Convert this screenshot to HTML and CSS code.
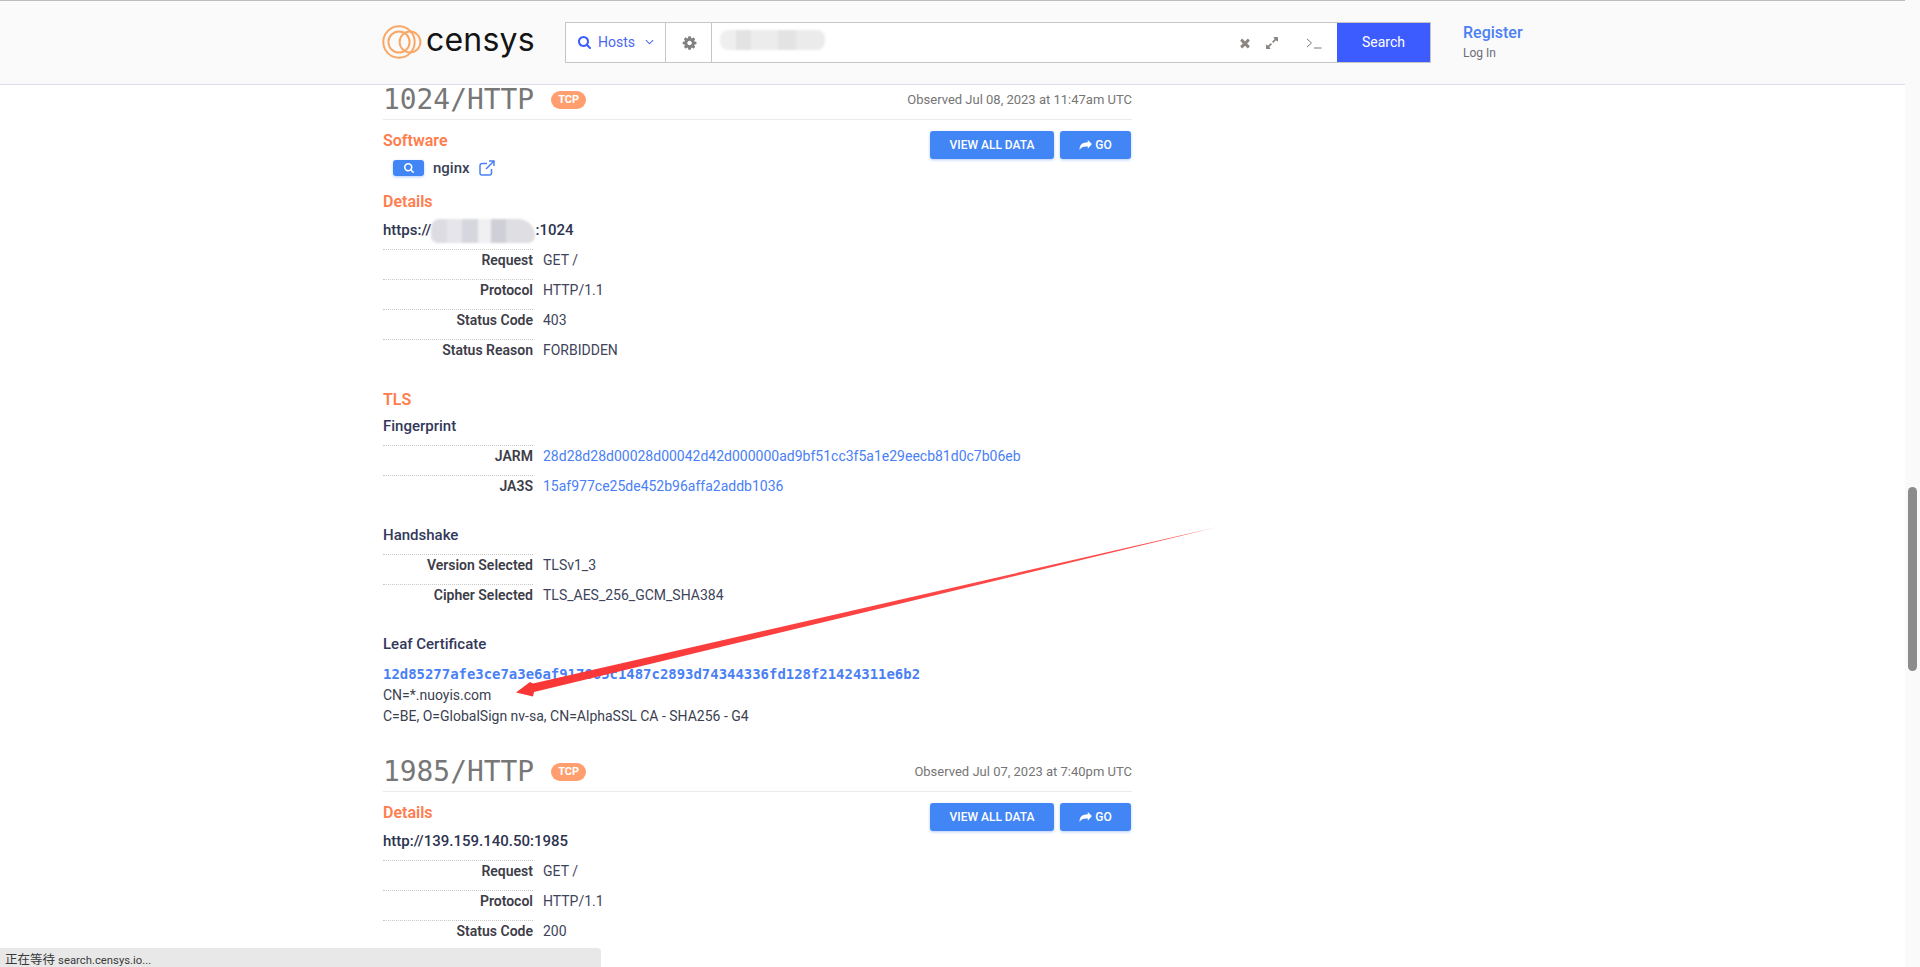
FILE: index.html
```html
<!DOCTYPE html>
<html lang="en">
<head>
<meta charset="utf-8">
<title>Censys</title>
<link rel="stylesheet" href="styles.css">
</head>
<body>
<header class="topbar">
  <div class="logo">
    <svg class="logo-rings" viewBox="0 0 40 36" aria-hidden="true">
      <circle cx="17" cy="18" r="15.7"/><circle cx="17" cy="18" r="10.6"/><circle cx="28" cy="18" r="10.4"/>
    </svg>
    <span class="logo-text">censys</span>
  </div>
  <div class="searchbox">
    <div class="seg seg-hosts">
      <svg class="ic ic-hosts" viewBox="0 0 1664 1664"><path d="M1152 704q0-185-131.500-316.500t-316.500-131.500-316.500 131.500-131.500 316.500 131.500 316.500 316.500 131.500 316.500-131.500 131.500-316.500zm512 832q0 52-38 90t-90 38q-54 0-90-38l-343-342q-179 124-399 124-143 0-273.500-55.500t-225-150-150-225-55.500-273.500 55.500-273.500 150-225 225-150 273.500-55.500 273.500 55.500 225 150 150 225 55.500 273.500q0 220-124 399l343 343q37 37 37 90z"/></svg>
      <span>Hosts</span>
      <svg class="chev" viewBox="0 0 10 6"><path d="M1 1l4 4 4-4"/></svg>
    </div>
    <div class="seg seg-gear">
      <svg class="ic ic-gear" viewBox="0 0 1792 1792"><path transform="translate(64 0)" d="M1152 896q0-106-75-181t-181-75-181 75-75 181 75 181 181 75 181-75 75-181zm512-109v222q0 12-8 23t-20 13l-185 28q-19 54-39 91 35 50 107 138 10 12 10 25t-9 23q-27 37-99 108t-94 71q-12 0-26-9l-138-108q-44 23-91 38-16 136-29 186-7 28-36 28h-222q-14 0-24.500-8.500t-11.500-21.500l-28-184q-49-16-90-37l-141 107q-10 9-25 9-14 0-25-11-126-114-165-168-7-10-7-23 0-12 8-23 15-21 51-66.500t54-70.500q-27-50-41-99l-183-27q-13-2-21-12.500t-8-23.500v-222q0-12 8-23t19-13l186-28q14-46 39-92-40-57-107-138-10-12-10-24 0-10 9-23 26-36 98.500-107.500t94.500-71.500q13 0 26 10l138 107q44-23 91-38 16-136 29-186 7-28 36-28h222q14 0 24.500 8.500t11.500 21.500l28 184q49 16 90 37l142-107q9-9 24-9 13 0 25 10 129 119 165 170 7 8 7 22 0 12-8 23-15 21-51 66.500t-54 70.500q26 50 41 98l183 28q13 2 21 12.500t8 23.500z"/></svg>
    </div>
    <div class="seg-input">
      <div class="redact-query"></div>
      <div class="input-icons">
        <svg class="ic ic-x" viewBox="0 0 1792 1792"><path d="M1490 1322q0 40-28 68l-136 136q-28 28-68 28t-68-28l-294-294-294 294q-28 28-68 28t-68-28l-136-136q-28-28-28-68t28-68l294-294-294-294q-28-28-28-68t28-68l136-136q28-28 68-28t68 28l294 294 294-294q28-28 68-28t68 28l136 136q28 28 28 68t-28 68l-294 294 294 294q28 28 28 68z"/></svg>
        <svg class="ic ic-expand" viewBox="0 0 1792 1792"><path d="M883 1056q0 13-10 23l-332 332 144 144q19 19 19 45t-19 45-45 19h-448q-26 0-45-19t-19-45v-448q0-26 19-45t45-19 45 19l144 144 332-332q10-10 23-10t23 10l114 114q10 10 10 23zm781-864v448q0 26-19 45t-45 19-45-19l-144-144-332 332q-10 10-23 10t-23-10l-114-114q-10-10-10-23t10-23l332-332-144-144q-19-19-19-45t19-45 45-19h448q26 0 45 19t19 45z"/></svg>
        <svg class="ic-term" viewBox="0 0 16 12"><path d="M1 2l4.500 4L1 10M8 11h7.500"/></svg>
      </div>
    </div>
    <button class="search-btn">Search</button>
  </div>
  <div class="account">
    <a class="register">Register</a>
    <a class="login">Log In</a>
  </div>
</header>

<main class="content">
  <section class="service">
    <div class="svc-head">
      <h2 class="svc-title">1024/HTTP</h2>
      <span class="tcp">TCP</span>
      <span class="observed">Observed Jul 08, 2023 at 11:47am UTC</span>
    </div>
    <div class="svc-body">
      <div class="svc-main">
        <h3 class="orange">Software</h3>
        <div class="sw-row">
          <span class="sw-btn"><svg viewBox="0 0 1664 1664"><path d="M1152 704q0-185-131.500-316.500t-316.500-131.500-316.500 131.500-131.500 316.500 131.500 316.500 316.500 131.500 316.500-131.500 131.500-316.500zm512 832q0 52-38 90t-90 38q-54 0-90-38l-343-342q-179 124-399 124-143 0-273.500-55.500t-225-150-150-225-55.500-273.500 55.500-273.500 150-225 225-150 273.500-55.500 273.500 55.500 225 150 150 225 55.500 273.500q0 220-124 399l343 343q37 37 37 90z"/></svg></span>
          <span class="sw-name">nginx</span>
          <svg class="ext" viewBox="0 0 16 16"><path d="M12.500 9v4a2 2 0 0 1-2 2H3a2 2 0 0 1-2-2V5.500a2 2 0 0 1 2-2h5M10 1h5v5M15 1L7 9"/></svg>
        </div>
        <h3 class="orange gap-sec">Details</h3>
        <div class="url">https://<span class="redact-url"></span>:1024</div>
        <div class="kv">
          <div class="kv-row"><span class="k">Request</span><span class="v">GET /</span></div>
          <div class="kv-row"><span class="k">Protocol</span><span class="v">HTTP/1.1</span></div>
          <div class="kv-row"><span class="k">Status Code</span><span class="v">403</span></div>
          <div class="kv-row"><span class="k">Status Reason</span><span class="v">FORBIDDEN</span></div>
        </div>
        <h3 class="orange gap-tls">TLS</h3>
        <div class="sub">Fingerprint</div>
        <div class="kv">
          <div class="kv-row"><span class="k">JARM</span><a class="v link">28d28d28d00028d00042d42d000000ad9bf51cc3f5a1e29eecb81d0c7b06eb</a></div>
          <div class="kv-row"><span class="k">JA3S</span><a class="v link">15af977ce25de452b96affa2addb1036</a></div>
        </div>
        <div class="sub sub-hand">Handshake</div>
        <div class="kv">
          <div class="kv-row"><span class="k">Version Selected</span><span class="v">TLSv1_3</span></div>
          <div class="kv-row"><span class="k">Cipher Selected</span><span class="v">TLS_AES_256_GCM_SHA384</span></div>
        </div>
        <div class="sub sub-leaf">Leaf Certificate</div>
        <a class="hash">12d85277afe3ce7a3e6af917865c1487c2893d74344336fd128f21424311e6b2</a>
        <div class="cert">CN=*.nuoyis.com</div>
        <div class="cert">C=BE, O=GlobalSign nv-sa, CN=AlphaSSL CA - SHA256 - G4</div>
      </div>
      <div class="svc-actions">
        <a class="btn btn-all">VIEW ALL DATA</a>
        <a class="btn btn-go"><svg viewBox="0 0 1792 1400"><path d="M1792 560 1216 0v320C500 340 60 620 60 1400c200-400 600-540 1156-500v320z"/></svg>GO</a>
      </div>
    </div>
  </section>

  <section class="service next">
    <div class="svc-head">
      <h2 class="svc-title">1985/HTTP</h2>
      <span class="tcp">TCP</span>
      <span class="observed">Observed Jul 07, 2023 at 7:40pm UTC</span>
    </div>
    <div class="svc-body">
      <div class="svc-main">
        <h3 class="orange">Details</h3>
        <div class="url">http://139.159.140.50:1985</div>
        <div class="kv">
          <div class="kv-row"><span class="k">Request</span><span class="v">GET /</span></div>
          <div class="kv-row"><span class="k">Protocol</span><span class="v">HTTP/1.1</span></div>
          <div class="kv-row"><span class="k">Status Code</span><span class="v">200</span></div>
        </div>
      </div>
      <div class="svc-actions">
        <a class="btn btn-all">VIEW ALL DATA</a>
        <a class="btn btn-go"><svg viewBox="0 0 1792 1400"><path d="M1792 560 1216 0v320C500 340 60 620 60 1400c200-400 600-540 1156-500v320z"/></svg>GO</a>
      </div>
    </div>
  </section>
</main>

<svg class="arrow" viewBox="0 0 1920 967" aria-hidden="true">
  <defs>
    <linearGradient id="fade" gradientUnits="userSpaceOnUse" x1="1222" y1="526" x2="516" y2="692">
      <stop offset="0" stop-color="#ff3b3b" stop-opacity=".3"/>
      <stop offset=".05" stop-color="#ff3b3b" stop-opacity=".9"/>
      <stop offset="1" stop-color="#f93636"/>
    </linearGradient>
  </defs>
  <polygon fill="url(#fade)" points="1222,526 533,683.500 530,682 516,692.500 533,696.500 534,692"/>
</svg>

<div class="scrolltrack"><div class="scrollthumb"></div></div>
<div class="statusbar">正在等待 <span class="status-url">search.censys.io...</span></div>
</body>
</html>
```
FILE: styles.css
```css
* { box-sizing: border-box; }
html, body { margin: 0; height: 967px; overflow: hidden; background: #fff; }
body { font-family: Roboto, "Liberation Sans", sans-serif; font-size: 14px; color: #363a4a; position: relative; }
a { text-decoration: none; }
h2, h3 { margin: 0; }

.topbar { height: 85px; display: flex; align-items: flex-start; background: #fafafa; border-top: 1px solid #bdbdbd; border-bottom: 1px solid #dcdce8; padding-left: 382px; }
.logo { display: flex; align-items: center; width: 183px; height: 34px; margin-top: 24px; }
.logo-rings { width: 40px; height: 36px; fill: none; stroke: #f9a766; stroke-width: 2; flex: none; }
.logo-text { font-family: Inter, sans-serif; font-size: 32px; font-weight: 400; color: #141414; margin-left: 4px; letter-spacing: .2px; line-height: 34px; position: relative; top: -2px; }

.searchbox { display: flex; width: 866px; height: 41px; margin-top: 21px; border: 1px solid #c6c6c6; background: #fff; }
.seg { display: flex; align-items: center; border-right: 1px solid #c6c6c6; flex: none; }
.seg-hosts { width: 100px; padding-left: 12px; padding-bottom: 1px; color: #4c66f0; font-size: 14px; }
.seg-gear { width: 46px; justify-content: center; }
.ic { fill: #888; display: block; }
.ic-hosts { width: 13px; height: 13px; fill: #3d5cff; margin-right: 7px; }
.chev { width: 9px; height: 6px; margin-left: 10px; fill: none; stroke: #4c66f0; stroke-width: 1.200; }
.ic-gear { width: 16px; height: 16px; fill: #808080; }
.seg-input { flex: 1; display: flex; align-items: center; justify-content: space-between; }
.redact-query { width: 105px; height: 20px; margin-left: 8px; margin-top: -6px; border-radius: 8px; background: linear-gradient(90deg, #efefef 0 15%, #e2e2e2 15% 30%, #ececec 30% 55%, #e3e3e3 55% 72%, #ebebeb 72% 100%); filter: blur(1px); }
.input-icons { display: flex; align-items: center; }
.ic-x { width: 14px; height: 14px; fill: #8c8580; }
.ic-expand { width: 14px; height: 14px; fill: #8a8580; margin-left: 13px; }
.ic-term { width: 16px; height: 12px; margin-left: 27px; margin-right: 15px; fill: none; stroke: #7a7a7a; stroke-width: 1; }
.search-btn { width: 93px; flex: none; border: 0; background: #3d5cff; color: #fff; font: 400 14px Roboto, sans-serif; padding: 0 0 1px; }

.account { display: flex; flex-direction: column; margin-left: 32px; margin-top: 22px; }
.register { color: #4a80f5; font-size: 16px; font-weight: 500; line-height: 20px; }
.login { color: #6c6c7c; font-size: 12px; line-height: 14px; margin-top: 3px; }

.content { width: 749px; margin-left: 383px; }
.svc-head { height: 35px; display: flex; align-items: center; border-bottom: 1px solid #ebebeb; padding-bottom: 4px; }
.svc-title { font-family: "DejaVu Sans Mono", monospace; font-weight: 400; font-size: 27.900px; line-height: 30px; color: #777; }
.tcp { width: 35px; height: 18px; margin-left: 17px; border-radius: 9px; background: #ff9f70; color: #fff; font-size: 11px; font-weight: 700; line-height: 18px; text-align: center; }
.observed { margin-left: auto; margin-bottom: 2px; font-size: 13px; color: #757575; }

.svc-body { display: flex; justify-content: space-between; align-items: flex-start; }
.svc-main { padding-top: 10px; flex: 1; min-width: 0; }
.svc-actions { display: flex; gap: 6px; margin-top: 11px; padding-right: 1px; flex: none; }
.btn { display: flex; align-items: center; justify-content: center; height: 28px; border-radius: 3px; background: #4285f4; color: #fff; font-size: 12px; font-weight: 500; box-shadow: 0 1px 3px rgba(66,133,244,.4); }
.btn-all { width: 124px; }
.btn-go { width: 71px; }
.btn-go svg { width: 13px; height: 10px; fill: #fff; margin-right: 3px; }

.orange { font-size: 16px; font-weight: 600; line-height: 22px; color: #ff7d4d; }
.gap-sec { margin-top: 12px; }
.gap-tls { margin-top: 20px; }
.sw-row { display: flex; align-items: center; height: 22px; margin-top: 5px; padding-left: 10px; }
.sw-btn { display: flex; align-items: center; justify-content: center; width: 31px; height: 16px; border-radius: 3px; background: #4285f4; box-shadow: 0 1px 3px rgba(66,133,244,.4); }
.sw-btn svg { width: 10px; height: 10px; fill: #fff; }
.sw-name { margin-left: 9px; font-size: 15px; font-weight: 500; color: #3a3f55; }
.ext { width: 16px; height: 16px; margin-left: 9px; fill: none; stroke: #4a80f5; stroke-width: 1.500; margin-top: -1px; }
.url { font-size: 15px; font-weight: 500; line-height: 22px; margin-top: 6px; color: #2e3350; }
.redact-url { display: inline-block; width: 104px; height: 24px; margin: -4px 0; vertical-align: middle; border-radius: 12px 24px 10px 10px; background: linear-gradient(90deg, #dcdce2 0 15%, #e6e6ea 15% 30%, #d6d6de 30% 45%, #f0f0f3 45% 58%, #cfcfd8 58% 72%, #dedee3 72% 100%); filter: blur(1px); }
.sub { font-size: 15px; font-weight: 500; line-height: 22px; margin-top: 4px; color: #33385a; }
.sub-hand { margin-top: 19px; }
.sub-leaf { margin-top: 19px; }
.kv { margin-top: 8px; }
.kv-row { display: flex; height: 30px; line-height: 20px; }
.k { width: 150px; height: 30px; flex: none; text-align: right; font-weight: 600; color: #3d3d48; white-space: nowrap; border-top: 1px dotted #c8c8c8; }
.v { margin-left: 10px; padding-top: 1px; white-space: nowrap; color: #40445a; }
.v.link { color: #4a80f5; }
.hash { display: block; margin-top: 9px; font-family: "DejaVu Sans Mono", monospace; font-weight: 700; font-size: 13.950px; line-height: 21px; color: #4a80f5; white-space: nowrap; }
.cert { line-height: 21px; color: #3b3f50; }
.next { margin-top: 30px; }

.arrow { position: absolute; left: 0; top: 0; width: 1920px; height: 967px; pointer-events: none; }
.scrolltrack { position: absolute; right: 0; top: 0; bottom: 0; width: 15px; background: #fafafa; }
.scrollthumb { position: absolute; left: 3px; top: 487px; width: 9px; height: 184px; border-radius: 4.500px; background: #8c8c8c; }
.statusbar { position: absolute; left: 0; bottom: 0; width: 601px; height: 19px; padding-left: 5px; background: #e8e8e8; border-top-right-radius: 4px; font-family: Roboto, "Noto Sans CJK SC", sans-serif; font-size: 12.500px; line-height: 23px; color: #3a3a3a; overflow: hidden; }
.status-url { font-size: 11.300px; }
```
